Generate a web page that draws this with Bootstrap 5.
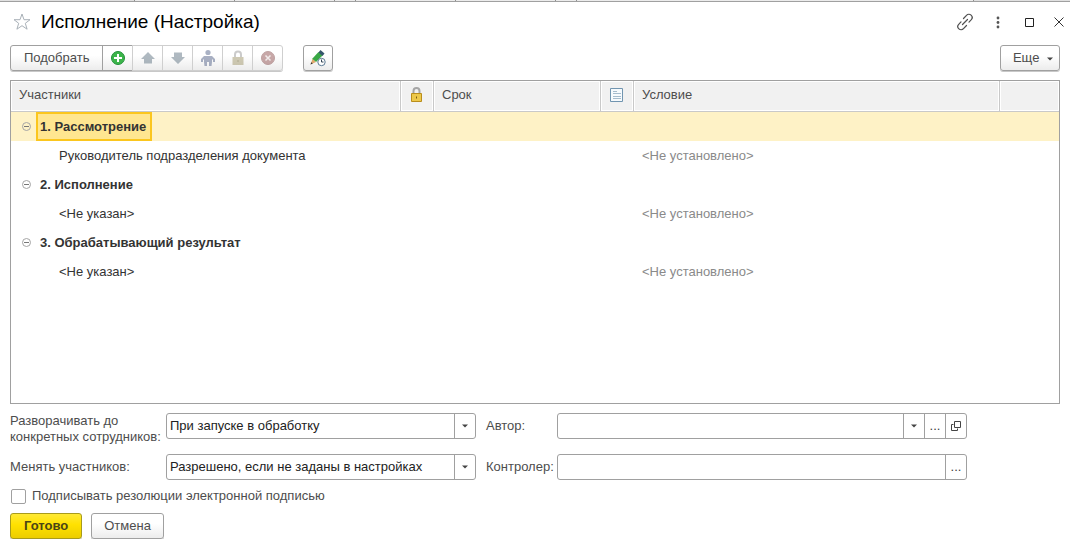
<!DOCTYPE html>
<html lang="ru">
<head>
<meta charset="utf-8">
<meta name="viewport" content="width=device-width, initial-scale=1">
<title>Исполнение (Настройка)</title>
<link href="https://cdn.jsdelivr.net/npm/bootstrap@5.3.0/dist/css/bootstrap.min.css" rel="stylesheet">
<style>
  body { font: 13px/16px "Liberation Sans", Arial, sans-serif; color: #4d4d4d; background: #fff; }
  svg { display: block; }
  .tabstrip { height: 2px; background: #ececec; border-bottom: 1px solid #a0a0a0; }
  .tabstrip span { border-right: 1px solid #909090; width: 100px; }
  .tabstrip .tab-first { width: 135px; background: #e0e0e0; }
  .tabstrip .tab-gap { width: 21px; }
  .tabstrip .tab-wide { width: 397px; }
  .tabstrip .tab-rest { flex: 1; border: 0; background: #e0e0e0; }
  .titlebar { height: 43px; padding: 0 5px 3px 13px; }
  .titlebar h1 { font-size: 19px; line-height: 24px; color: #000; margin-left: 10px; }
  .titlebar button { border: 0; background: none; padding: 0; color: #404040; }
  .winbtns { gap: 17px; }
  .content { padding: 0 10px; }
  .cmd { --bs-btn-font-size: 13px; --bs-btn-line-height: 16px; --bs-btn-padding-y: 0; --bs-btn-padding-x: 13px;
    --bs-btn-color: #4d4d4d; --bs-btn-border-color: #a0a0a0; --bs-btn-hover-border-color: #888; --bs-btn-hover-color: #333;
    --bs-btn-border-radius: 3px; --bs-btn-disabled-border-color: #cfcfcf; --bs-btn-disabled-opacity: 1;
    height: 26px; background: linear-gradient(#fff 40%, #ececec); box-shadow: 0 1px 0 #c8c8c8; }
  .cmd-icon { width: 31px; padding: 0; display: flex; align-items: center; justify-content: center; }
  .cmd-icon.btn:disabled svg { opacity: .5; }
  .history { width: 30px; margin-left: 20px; }
  .more { padding: 0 6px 0 12px; }
  .cmd-main { --bs-btn-border-color: #a89b1c; --bs-btn-color: #4a4516; font-weight: 700;
    background: linear-gradient(#ffe935, #ffe100 45%, #eccd00); }
  .cmd-cancel { --bs-btn-padding-x: 12px; }
  .gridbox { border: 1px solid #a0a0a0; height: 324px; overflow: auto; margin-top: 9px; }
  .tree { table-layout: fixed; width: 100%; border-collapse: separate; border-spacing: 0; color: #333; }
  .tree th { height: 31px; padding: 0 8px 2px; font-weight: 400; color: #4d4d4d; background: #f1f1f1;
    border-right: 1px solid #c9c9c9; border-bottom: 1px solid #c9c9c9; box-shadow: inset 0 0 0 1px #fff; }
  .tree th:last-child { border-right: 0; }
  .tree th.ico { padding: 0 0 2px; }
  .tree th svg { margin: auto; }
  .tree td { height: 29px; padding: 0 8px; white-space: nowrap; }
  .tree td.leaf { padding-left: 48px; }
  .tree td.unset { color: #8a8a8a; }
  .tree td.group { padding: 0 0 0 10px; font-weight: 700; }
  .tree tr.picked td { background: #fef2c6; }
  .knob { border: 0; background: none; padding: 0; width: 11px; height: 11px; }
  .name { margin-left: 4px; padding: 0 4px 0 2px; height: 29px; line-height: 25px; border: 2px solid transparent; }
  .picked .name { background: #ffe690; border-color: #fbc61e; }
  .fields { display: grid; grid-template-columns: 156px minmax(0, 310fr) 81px minmax(0, 410fr) 93px;
    row-gap: 9px; align-items: start; margin-top: 9px; }
  .fields .side { padding-left: 10px; }
  .fields .oneline { line-height: 26px; white-space: nowrap; }
  .box { height: 26px; border: 1px solid #a0a0a0; border-radius: 3px; background: #fff; overflow: hidden; }
  .box select, .box input { width: 100%; height: 24px; min-width: 0; flex: 1; border: 0; outline: 0; padding: 0 3px; color: #222;
    background: none; appearance: none; }
  .box button { width: 21px; padding: 0; border: 0; border-left: 1px solid #a0a0a0; background: none; color: #404040; }
  .pick { top: 0; right: 0; width: 21px; height: 24px; border-left: 1px solid #a0a0a0; pointer-events: none; }
  .signrow { margin: 8px 0 9px 1px; }
  .tick { appearance: none; width: 15px; height: 15px; margin: 0; border: 1px solid #a0a0a0; border-radius: 2px; }
  .signrow label { margin-left: 6px; }
  .actions { gap: 9px; }
</style>
</head>
<body>
<div class="tabstrip d-flex"><span class="tab-first"></span><span></span><span></span><span class="tab-gap"></span><span></span><span></span><span class="tab-gap"></span><span class="tab-wide"></span><span class="tab-rest"></span></div>

<header class="titlebar d-flex align-items-center">
  <button type="button" aria-label="Избранное"><svg width="18" height="18" viewBox="0 0 18 18" fill="none" stroke="#a9b1b8"><path d="M9 1l2 5.700h6l-4.700 3.600 1.800 5.900L9 12.700l-5.100 3.500 1.800-5.900L1 6.700h6z"/></svg></button>
  <h1 class="mb-0 me-auto">Исполнение (Настройка)</h1>
  <div class="winbtns d-flex align-items-center">
    <button type="button" aria-label="Ссылка"><svg width="18" height="18" viewBox="0 0 18 18" fill="none" stroke="#505050" stroke-width="1.200" stroke-linecap="round"><path d="M6.500 11.500l5-5M7.500 5.500l3-3.200a3 3 0 0 1 4.800 4.400l-2.300 2.400M10.500 12.500l-3 3.200a3 3 0 0 1-4.800-4.400l2.300-2.400"/></svg></button>
    <button type="button" aria-label="Меню"><svg width="14" height="14" viewBox="0 0 14 14" fill="#555"><circle cx="7" cy="3" r="1.400"/><circle cx="7" cy="7.500" r="1.400"/><circle cx="7" cy="12" r="1.400"/></svg></button>
    <button type="button" aria-label="Развернуть"><svg width="14" height="14" viewBox="0 0 14 14"><path d="M3.500 3.500h8v8h-8z" fill="none" stroke="#222"/></svg></button>
    <button type="button" aria-label="Закрыть"><svg width="12" height="12" viewBox="0 0 12 12"><path d="M1.500 1.500l9 9M10.500 1.500l-9 9" stroke="#333"/></svg></button>
  </div>
</header>

<main class="content">
  <div class="d-flex">
    <div class="btn-group" role="toolbar">
      <button type="button" class="btn cmd">Подобрать</button>
      <button type="button" class="btn cmd cmd-icon" aria-label="Добавить"><svg width="16" height="16" viewBox="0 0 16 16"><circle cx="8" cy="8" r="6.500" fill="#3cb54a" stroke="#23903a"/><path d="M8 4v8M4 8h8" stroke="#fff" stroke-width="2"/></svg></button>
      <button type="button" class="btn cmd cmd-icon" disabled aria-label="Вверх"><svg width="16" height="16" viewBox="0 0 16 16"><path d="M8 2l7 7h-3v4.500H4V9H1z" fill="#627684"/></svg></button>
      <button type="button" class="btn cmd cmd-icon" disabled aria-label="Вниз"><svg width="16" height="16" viewBox="0 0 16 16"><path d="M8 14l7-7h-3V2.500H4V7H1z" fill="#627684"/></svg></button>
      <button type="button" class="btn cmd cmd-icon" disabled aria-label="Участник"><svg width="16" height="18" viewBox="0 0 16 18" fill="#56658a"><circle cx="8" cy="3.500" r="2.600"/><path d="M4 7h8l3 3v3h-2v-2l-1-1v3l-.5 4H9v-4H7v4H4.500L4 13v-3l-1 1v2H1v-3z"/></svg></button>
      <button type="button" class="btn cmd cmd-icon" disabled aria-label="Блокировка"><svg width="14" height="16" viewBox="0 0 14 16"><path d="M4 7V4.500a3 3 0 0 1 6 0V7" fill="none" stroke="#999" stroke-width="2"/><path d="M1.500 7h11v8h-11z" fill="#a1976c"/><path d="M7 10v2" stroke="#665c2d"/></svg></button>
      <button type="button" class="btn cmd cmd-icon" disabled aria-label="Удалить"><svg width="16" height="16" viewBox="0 0 16 16"><circle cx="8" cy="8" r="6.500" fill="#925353" stroke="#804848"/><path d="M5.500 5.500l5 5M10.500 5.500l-5 5" stroke="#e8dcdc" stroke-width="1.500"/></svg></button>
    </div>
    <button type="button" class="btn cmd cmd-icon history me-auto" aria-label="История изменений"><svg width="18" height="18" viewBox="0 0 18 18"><path d="M3 10l6.500-7 4 3.500L7 13z" fill="#39a845"/><path d="M9.500 3.500L11.500 1l4 3.500-2 2.500z" fill="#35566b"/><path d="M1.500 15.500l2-5.500L7 13z" fill="#e0a86c"/><path d="M1.500 15.500l.8-2.200 1.500 1.200z" fill="#333"/><circle cx="12.500" cy="13" r="3.700" fill="#fff" stroke="#5c7a92"/><path d="M12.500 10.500V13h2" fill="none" stroke="#345"/></svg></button>
    <button type="button" class="btn cmd more">Еще <svg class="d-inline-block ms-1" width="6" height="4" viewBox="0 0 6 4"><path d="M0 .5h6L3 3.500z" fill="#444"/></svg></button>
  </div>

  <div class="gridbox">
    <table class="tree">
      <colgroup><col style="width:390px"><col style="width:33px"><col style="width:167px"><col style="width:33px"><col><col style="width:59px"></colgroup>
      <thead>
        <tr>
          <th>Участники</th>
          <th class="ico"><svg width="14" height="16" viewBox="0 0 14 16"><path d="M3.500 7V4a3 3 0 0 1 6 0v3" fill="none" stroke="#a5a5a5" stroke-width="2"/><path d="M1.500 6.500h10v8h-10z" fill="#edc84a" stroke="#b98d1c"/><path d="M6.500 9.500v2" stroke="#7a5a10"/></svg></th>
          <th>Срок</th>
          <th class="ico"><svg width="14" height="14" viewBox="0 0 14 14"><path d="M.5.5h12v13H.5z" fill="#f6fafd" stroke="#7195b0"/><path d="M3 3.500h4M3 5.500h8M3 8.500h8M3 10.500h8" stroke="#a5bccd"/></svg></th>
          <th>Условие</th>
          <th></th>
        </tr>
      </thead>
      <tbody>
        <tr class="picked"><td class="group"><div class="d-flex align-items-center"><button type="button" class="knob" aria-label="Свернуть"><svg width="11" height="11" viewBox="0 0 11 11" fill="none" stroke="#a5a5a5"><circle cx="5.500" cy="5.500" r="4"/><path d="M3 5.500h5" stroke="#777"/></svg></button><span class="name">1. Рассмотрение</span></div></td><td></td><td></td><td></td><td></td><td></td></tr>
        <tr><td class="leaf">Руководитель подразделения документа</td><td></td><td></td><td></td><td class="unset">&lt;Не установлено&gt;</td><td></td></tr>
        <tr><td class="group"><div class="d-flex align-items-center"><button type="button" class="knob" aria-label="Свернуть"><svg width="11" height="11" viewBox="0 0 11 11" fill="none" stroke="#a5a5a5"><circle cx="5.500" cy="5.500" r="4"/><path d="M3 5.500h5" stroke="#777"/></svg></button><span class="name">2. Исполнение</span></div></td><td></td><td></td><td></td><td></td><td></td></tr>
        <tr><td class="leaf">&lt;Не указан&gt;</td><td></td><td></td><td></td><td class="unset">&lt;Не установлено&gt;</td><td></td></tr>
        <tr><td class="group"><div class="d-flex align-items-center"><button type="button" class="knob" aria-label="Свернуть"><svg width="11" height="11" viewBox="0 0 11 11" fill="none" stroke="#a5a5a5"><circle cx="5.500" cy="5.500" r="4"/><path d="M3 5.500h5" stroke="#777"/></svg></button><span class="name">3. Обрабатывающий результат</span></div></td><td></td><td></td><td></td><td></td><td></td></tr>
        <tr><td class="leaf">&lt;Не указан&gt;</td><td></td><td></td><td></td><td class="unset">&lt;Не установлено&gt;</td><td></td></tr>
      </tbody>
    </table>
  </div>

  <form>
    <div class="fields">
      <label for="expand">Разворачивать до конкретных сотрудников:</label>
      <div class="box position-relative"><select id="expand"><option>При запуске в обработку</option></select><span class="pick position-absolute d-flex align-items-center justify-content-center"><svg width="6" height="4" viewBox="0 0 6 4"><path d="M0 .5h6L3 3.500z" fill="#444"/></svg></span></div>
      <label class="side oneline" for="author">Автор:</label>
      <div class="box d-flex"><input id="author" type="text"><button type="button" aria-label="Список"><svg class="m-auto" width="6" height="4" viewBox="0 0 6 4"><path d="M0 .5h6L3 3.500z" fill="#444"/></svg></button><button type="button">...</button><button type="button" aria-label="Открыть"><svg class="m-auto" width="10" height="10" viewBox="0 0 10 10" fill="none" stroke="#444"><path d="M3.500.5h6v6h-6zM2.500 3.500h-2v6h6v-2"/></svg></button></div>
      <span></span>
      <label class="oneline" for="change">Менять участников:</label>
      <div class="box position-relative"><select id="change"><option>Разрешено, если не заданы в настройках</option></select><span class="pick position-absolute d-flex align-items-center justify-content-center"><svg width="6" height="4" viewBox="0 0 6 4"><path d="M0 .5h6L3 3.500z" fill="#444"/></svg></span></div>
      <label class="side oneline" for="control">Контролер:</label>
      <div class="box d-flex"><input id="control" type="text"><button type="button">...</button></div>
    </div>
    <div class="signrow d-flex align-items-center">
      <input class="tick" type="checkbox" id="sign"><label for="sign">Подписывать резолюции электронной подписью</label>
    </div>
    <div class="actions d-flex">
      <button type="submit" class="btn cmd cmd-main">Готово</button>
      <button type="button" class="btn cmd cmd-cancel">Отмена</button>
    </div>
  </form>
</main>
<script src="https://cdn.jsdelivr.net/npm/bootstrap@5.3.0/dist/js/bootstrap.bundle.min.js"></script>
</body>
</html>
